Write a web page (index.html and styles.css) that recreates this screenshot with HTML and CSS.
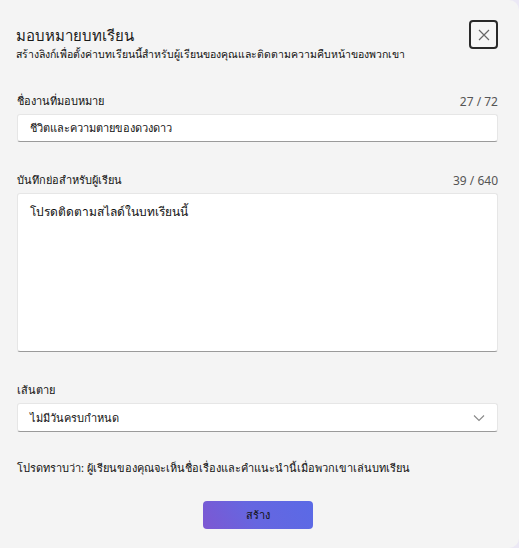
FILE: index.html
```html
<!DOCTYPE html>
<html lang="th">
<head>
<meta charset="utf-8">
<link rel="stylesheet" href="styles.css">
</head>
<body>
<div class="dialog">
  <div class="header">
    <div class="titles">
      <h1 class="title">มอบหมายบทเรียน</h1>
      <p class="subtitle">สร้างลิงก์เพื่อตั้งค่าบทเรียนนี้สำหรับผู้เรียนของคุณและติดตามความคืบหน้าของพวกเขา</p>
    </div>
    <button class="close" aria-label="ปิด">
      <svg width="12" height="12" viewBox="0 0 12 12"><path d="M1 1L11 11M11 1L1 11" stroke="#666" stroke-width="1.2" fill="none"/></svg>
    </button>
  </div>

  <div class="field first">
    <div class="label-row"><span class="label">ชื่องานที่มอบหมาย</span><span class="count">27 / 72</span></div>
    <div class="input">ชีวิตและความตายของดวงดาว</div>
  </div>

  <div class="field">
    <div class="label-row"><span class="label">บันทึกย่อสำหรับผู้เรียน</span><span class="count">39 / 640</span></div>
    <div class="input textarea">โปรดติดตามสไลด์ในบทเรียนนี้</div>
  </div>

  <div class="field">
    <div class="label-row"><span class="label">เส้นตาย</span></div>
    <div class="input select">
      <span>ไม่มีวันครบกำหนด</span>
      <svg width="12" height="8" viewBox="0 0 12 8"><path d="M1 1.5L6 6.5L11 1.5" stroke="#888" stroke-width="1.1" fill="none"/></svg>
    </div>
  </div>

  <p class="note">โปรดทราบว่า: ผู้เรียนของคุณจะเห็นชื่อเรื่องและคำแนะนำนี้เมื่อพวกเขาเล่นบทเรียน</p>

  <div class="actions">
    <button class="create">สร้าง</button>
  </div>
</div>
</body>
</html>
```

FILE: styles.css
```css
html, body {
  margin: 0;
  padding: 0;
  background: #ebe8f5;
}
body {
  font-family: "Noto Sans", "Noto Sans CJK SC", "DejaVu Sans", sans-serif;
  color: #1a1a1a;
}
.dialog {
  width: 519px;
  height: 548px;
  box-sizing: border-box;
  background: #f4f4f4;
  border-radius: 0 10px 10px 0;
  padding: 20px 21px 0 17px;
}
.header {
  display: flex;
  justify-content: space-between;
  align-items: flex-start;
}
.titles {
  padding-top: 5px;
  margin-left: -1px;
}
.title {
  margin: 0;
  font-size: 15px;
  font-weight: 400;
  line-height: 20px;
  color: #1a1a1a;
}
.subtitle {
  margin: 1px 0 0;
  font-size: 10.5px;
  line-height: 16px;
  color: #111;
}
.close {
  width: 29px;
  height: 29px;
  box-sizing: border-box;
  border: 2px solid #2a2a2a;
  border-radius: 4px;
  background: #f6f6f6;
  display: flex;
  align-items: center;
  justify-content: center;
  padding: 0;
  margin-right: 0;
}
.field {
  margin-top: 30px;
}
.field.first {
  margin-top: 31px;
}
.label-row {
  display: flex;
  justify-content: space-between;
  align-items: center;
  height: 16px;
  margin-bottom: 5px;
}
.label {
  font-size: 11px;
  color: #111;
}
.count {
  font-size: 12px;
  color: #555;
}
.input {
  background: #fff;
  border-radius: 3px;
  border: 1px solid #e6e6e6;
  border-bottom: 1px solid #9a9a9a;
  height: 28px;
  box-sizing: border-box;
  padding: 0 12px;
  display: flex;
  align-items: center;
  font-size: 11px;
  color: #111;
}
.textarea {
  height: 159px;
  align-items: flex-start;
  padding-top: 8px;
  font-size: 12px;
}
.select {
  justify-content: space-between;
  height: 29px;
  padding-right: 12px;
}
.note {
  margin: 27px 0 0;
  font-size: 11px;
  color: #111;
}
.actions {
  display: flex;
  justify-content: center;
  margin-top: 24px;
}
.create {
  width: 110px;
  height: 28px;
  border: none;
  border-radius: 4px;
  background: linear-gradient(60deg, #7d57d2 0%, #6666e0 45%, #5a6ae6 100%);
  font-family: inherit;
  font-size: 11px;
  color: #111;
  margin-left: 1px;
}
```
